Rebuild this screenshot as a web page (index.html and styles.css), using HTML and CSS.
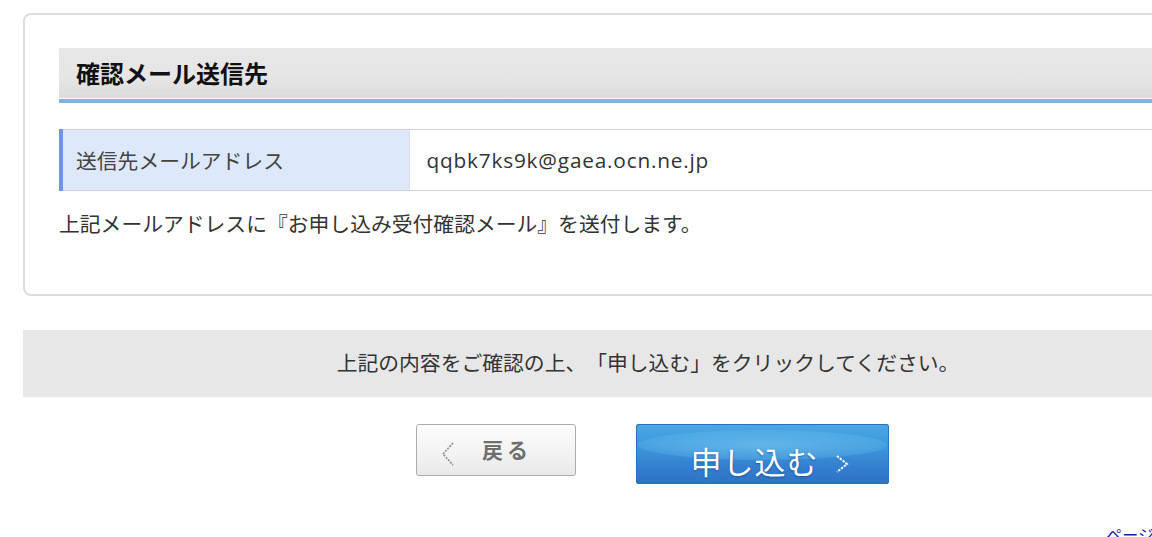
FILE: index.html
```html
<!DOCTYPE html>
<html lang="ja">
<head>
    <meta charset="UTF-8">
    <meta name="viewport" content="width=device-width, initial-scale=1.0">
    <title>お申し込み内容の確認</title>
    <link rel="stylesheet" href="styles.css">
</head>
<body>
    <div class="page">
        <!-- 確認メール送信先 -->
        <section class="box">
            <h2 class="box-title">確認メール送信先</h2>
            <table class="info-table">
                <tr>
                    <th>送信先メールアドレス</th>
                    <td>qqbk7ks9k@gaea.ocn.ne.jp</td>
                </tr>
            </table>
            <p class="box-note">上記メールアドレスに『お申し込み受付確認メール』を送付します。</p>
        </section>

        <!-- 申し込みボタン -->
        <div class="confirm-message">上記の内容をご確認の上、「申し込む」をクリックしてください。</div>

        <div class="btn-area">
            <a href="#" class="btn-back">
                <svg class="btn-back-arrow" width="14" height="26" viewBox="0 0 14 26">
                    <polyline points="12,2 2,13 12,24" fill="none" stroke="#8a8a8a" stroke-width="1.6" stroke-dasharray="2 1.2"/>
                </svg>
                <span>戻る</span>
            </a>
            <a href="#" class="btn-submit">
                <span class="btn-submit-gloss"></span>
                <span class="btn-submit-label">申し込む</span>
                <svg class="btn-submit-arrow" width="14" height="18" viewBox="0 0 14 18">
                    <polyline points="2,1 12,9 2,17" fill="none" stroke="#ffffff" stroke-width="2" stroke-dasharray="2.4 1.2"/>
                </svg>
            </a>
        </div>

        <div class="page-footer">
            <a href="#" class="page-top">ページの先頭へ</a>
        </div>
    </div>
</body>
</html>
```

FILE: styles.css
```css
* {
    margin: 0;
    padding: 0;
    box-sizing: border-box;
}

html, body {
    width: 100%;
    height: 100%;
    overflow: hidden;
    background: #ffffff;
    font-family: "Open Sans", "Noto Sans CJK JP", sans-serif;
    color: #333333;
    text-spacing-trim: space-all;
}

.page {
    width: 1250px;
    margin-left: 23px;
    padding-top: 13px;
}

.box {
    border: 2px solid #dddddd;
    border-radius: 8px;
    padding: 33px 0 54px 34px;
}

.box-title {
    height: 55px;
    padding-left: 17px;
    font-size: 24px;
    font-weight: bold;
    line-height: 51px;
    color: #111111;
    background: linear-gradient(to bottom, #e7e7e7 0%, #e6e6e6 55%, #dcdcdc 100%);
    border-bottom: 4px solid #8aaede;
    box-shadow: inset 0 -1px 0 #f4f8fd;
}

.info-table {
    width: 100%;
    margin-top: 26px;
    border-collapse: collapse;
    border-top: 1px solid #d3d3d3;
    border-bottom: 1px solid #d3d3d3;
}

.info-table th,
.info-table td {
    height: 61px;
    font-size: 20.8px;
    font-weight: normal;
    text-align: left;
    vertical-align: middle;
}

.info-table th {
    width: 348px;
    padding-left: 13px;
    color: #444444;
    background: #dde8fb;
    border-left: 4px solid #6f96dd;
}

.info-table td {
    padding-left: 17px;
    letter-spacing: 0.8px;
    color: #333333;
    border-left: 1px solid #dddddd;
}

.box-note {
    margin-top: 18px;
    font-size: 20.8px;
    line-height: 31px;
    color: #333333;
}

.confirm-message {
    margin-top: 34px;
    height: 67px;
    line-height: 67px;
    font-size: 20.8px;
    text-align: center;
    color: #333333;
    background: #e7e7e7;
}

.btn-area {
    display: flex;
    justify-content: center;
    align-items: flex-start;
    gap: 60px;
    margin-top: 27px;
    padding-left: 9px;
}

.btn-back {
    display: flex;
    align-items: center;
    width: 160px;
    height: 52px;
    padding-left: 24px;
    gap: 27px;
    border: 1px solid #acacac;
    border-radius: 3px;
    background: linear-gradient(to bottom, #fdfdfd 0%, #f2f2f2 60%, #e8e8e8 100%);
    text-decoration: none;
}

.btn-back span {
    font-size: 21px;
    font-weight: bold;
    letter-spacing: 4px;
    color: #6f6f6f;
    margin-top: -3px;
}

.btn-back-arrow {
    margin-top: 8px;
}

.btn-submit {
    position: relative;
    display: flex;
    align-items: center;
    justify-content: center;
    gap: 16px;
    width: 253px;
    height: 60px;
    padding-top: 16px;
    padding-left: 14px;
    border-radius: 3px;
    background: linear-gradient(to bottom, #4aa9e4 0%, #3c95da 40%, #3480d0 70%, #2d72c6 100%);
    box-shadow: inset 0 0 0 1px #2c6fbf;
    overflow: hidden;
    text-decoration: none;
}

/* 上部の光沢 */
.btn-submit-gloss {
    position: absolute;
    left: 2px;
    right: 2px;
    top: 6px;
    height: 30px;
    border-radius: 50%;
    background: radial-gradient(ellipse at center, rgba(120, 200, 242, 0.6) 0%, rgba(105, 190, 238, 0.4) 55%, rgba(90, 180, 235, 0) 100%);
}

.btn-submit-label {
    position: relative;
    font-size: 31px;
    line-height: 1;
    letter-spacing: 1px;
    color: #ffffff;
    text-shadow: 0 1px 2px rgba(20, 60, 120, 0.6);
}

.btn-submit-arrow {
    position: relative;
    margin-top: 4px;
}

.page-footer {
    margin-top: 38px;
    text-align: right;
    padding-right: 55px;
}

.page-top {
    font-size: 16px;
    color: #1a1a9e;
    text-decoration: none;
}
```
